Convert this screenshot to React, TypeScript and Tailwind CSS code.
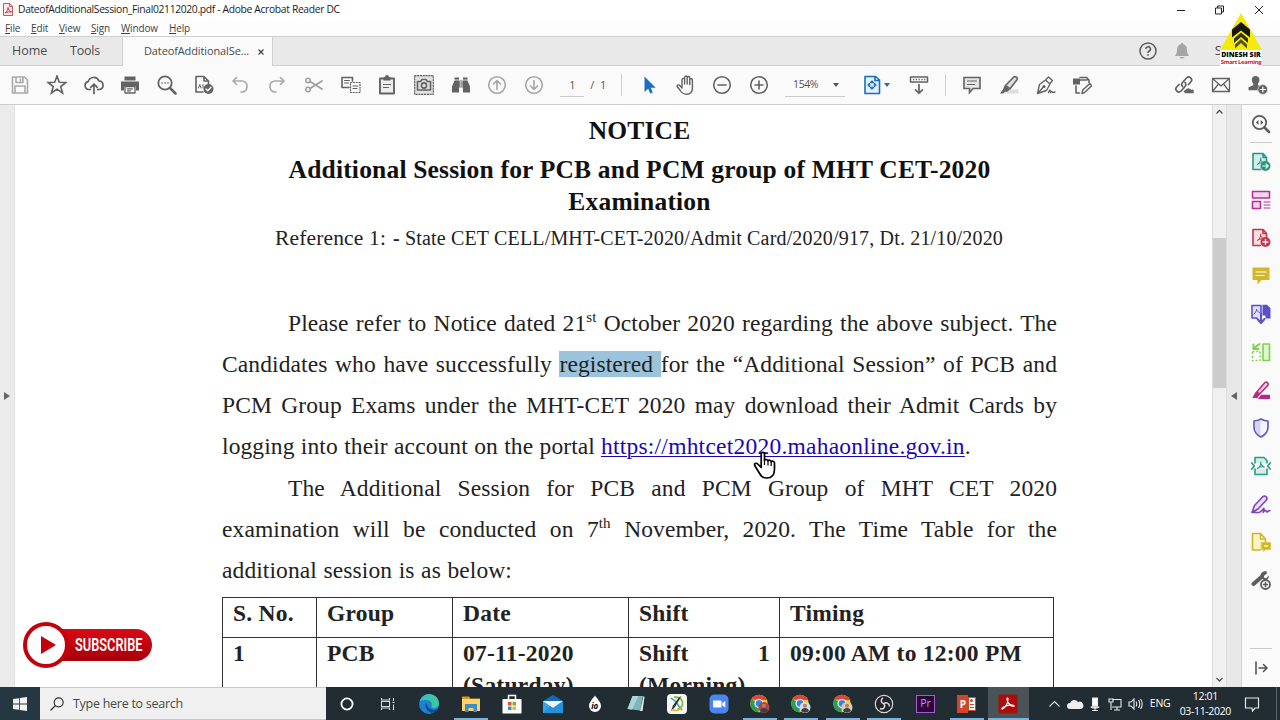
import type { ReactNode } from "react";

const UI = "font-['Open_Sans','Noto_Sans',sans-serif]";
const SERIF = "font-['Liberation_Serif','Times_New_Roman',serif]";

function Icon({ children, className = "text-[#636363]", size = 20 }: { children: ReactNode; className?: string; size?: number }) {
  return (
    <svg
      width={size}
      height={size}
      viewBox="0 0 20 20"
      fill="none"
      stroke="currentColor"
      strokeWidth="1.6"
      strokeLinecap="round"
      strokeLinejoin="round"
      className={`shrink-0 ${className}`}
    >
      {children}
    </svg>
  );
}

function Cell({ children }: { children: ReactNode }) {
  return <div className="flex w-[36.7px] shrink-0 items-center justify-center">{children}</div>;
}

const pdfMark = "M6.5 12.5c2-1 3.3-3.500 3.300-6.500M9.800 7.500c.7 2 1.800 3.200 3.700 3.700M7 11.800c1.500-.8 4-1.200 6-.8";

const leftTools: ReactNode[] = [
  <Icon className="text-[#a9a9a9]">
    <path d="M2.500 2h12l3 3v13h-15zM6 2.500v5h7v-5M10.500 4v2M5 18v-7h10v7" />
  </Icon>,
  <Icon>
    <path d="M10 1l2.300 6.300 6.700.2-5.300 4.100 1.900 6.400-5.600-3.800L4.400 18l1.900-6.400L1 7.500l6.700-.2z" strokeLinejoin="miter" />
  </Icon>,
  <Icon>
    <path d="M6.500 14.500H5a4 4 0 01-.8-7.900A5.800 5.800 0 0115 5.800a4.400 4.400 0 01.5 8.700h-2M10 18.500V9.500M6.800 12.300L10 9l3.200 3.300" strokeWidth="1.700" />
  </Icon>,
  <Icon>
    <path d="M4.500 1.500h11v4h-11z" fill="currentColor" stroke="none" />
    <path d="M1 6.500h18v9h-3v-4H4v4H1z" fill="currentColor" stroke="none" />
    <path d="M5 11.500h10v6.500H5zM7.500 13.800h5M7.500 15.800h3" strokeWidth="1.300" />
  </Icon>,
  <Icon>
    <circle cx="8" cy="8" r="6.700" strokeWidth="1.800" />
    <path d="M13 13l5.500 5.500" strokeWidth="2.500" />
    <path d="M5 8h.1M8 8h.1M11 8h.1" strokeWidth="1.600" />
  </Icon>,
  <Icon>
    <path d="M9 17H2V1.500h8L14.500 6v3M10 1.500V6h4.500" />
    <path d="M4.500 13l1.300-3.500L7 13M9 9.500V13" strokeWidth="1" />
    <circle cx="14.500" cy="14" r="5" fill="currentColor" stroke="none" />
    <path d="M12 14l1.800 1.800 3.200-3.500" stroke="white" strokeWidth="1.300" />
  </Icon>,
  <Icon className="text-[#aaaaaa]">
    <path d="M6.500 2.500L3 6l3.500 3.500M3.500 6H12a5 5 0 015 5v1a5 5 0 01-5 5h-1" strokeWidth="1.700" />
  </Icon>,
  <Icon className="text-[#aaaaaa]">
    <path d="M13.500 2.500L17 6l-3.500 3.500M16.500 6H8a5 5 0 00-5 5v1a5 5 0 005 5h1" strokeWidth="1.700" />
  </Icon>,
  <Icon className="text-[#a0a0a0]">
    <circle cx="4" cy="5.500" r="2.200" />
    <circle cx="4" cy="14.500" r="2.200" />
    <path d="M6 6.600L18 14M6 13.400L18 6" strokeWidth="1.800" />
  </Icon>,
  <Icon>
    <path d="M8 12.500H1v-10h10.500V6" strokeWidth="1.600" />
    <path d="M3.500 5.500h5M3.500 8h4" strokeWidth="1.100" />
    <path d="M9.500 7.500h9.500v10H9.500z" strokeWidth="1.200" strokeDasharray="1.200 1.600" />
    <path d="M12 11h5M12 13.500h4" strokeWidth="1" />
  </Icon>,
  <Icon>
    <path d="M3 3.500h14V18.500H3z" fill="#eeeeee" strokeWidth="1.900" />
    <path d="M6.500 2H8a2 2 0 014 0h1.500v3.500h-7z" fill="currentColor" stroke="none" />
    <path d="M6.500 9.500h7M6.500 12.500h5" strokeWidth="1.200" />
  </Icon>,
  <Icon>
    <path d="M.7.700h18.600v18.600H.7z" fill="#e0e0e0" strokeWidth="1.200" strokeDasharray="1.300 1.500" />
    <path d="M3.500 6.500h3l1.500-2h4l1.500 2h3v8.500h-13z" strokeWidth="1.600" />
    <circle cx="10" cy="10.500" r="2.600" />
  </Icon>,
  <Icon>
    <path d="M3.500 2.500h4.500v3h4v-3h4.500v3l2.500 6v6h-7v-5H8v5H1v-6l2.500-6z" fill="currentColor" stroke="none" />
    <path d="M3 5h5.500M11.500 5H17M9.200 6v6M11 6v6" stroke="#fafafa" strokeWidth=".8" />
  </Icon>,
  <Icon className="text-[#a6a6a6]">
    <circle cx="10" cy="10" r="8.300" />
    <path d="M10 14.500V6M6.500 9L10 5.500 13.500 9" />
  </Icon>,
  <Icon className="text-[#a6a6a6]">
    <circle cx="10" cy="10" r="8.300" />
    <path d="M10 5.500V14M6.500 11l3.500 3.500 3.500-3.500" />
  </Icon>,
];

const viewTools: ReactNode[] = [
  <Icon className="text-[#1b6ec2]">
    <path d="M5.500 1.500v15.500l3.700-3.300 2 4.800 2.500-1-2-4.700h5z" fill="currentColor" stroke="none" />
  </Icon>,
  <Icon>
    <path d="M6.200 11V4.700a1.300 1.300 0 012.600 0V9V2.300a1.300 1.300 0 012.600 0V9V2.800a1.300 1.300 0 012.600 0V9.500V5a1.300 1.300 0 012.600 0v8c0 3.800-2.200 6.200-6 6.200-3.200 0-4.600-1.300-6.100-3.700L1.300 11.500c-.2-1.700 2-2.200 3-.7l1.900 2.300z" strokeWidth="1.400" transform="translate(.8 0)" />
  </Icon>,
  <Icon>
    <circle cx="10" cy="10" r="8.300" />
    <path d="M6 10h8" />
  </Icon>,
  <Icon>
    <circle cx="10" cy="10" r="8.300" />
    <path d="M6 10h8M10 6v8" />
  </Icon>,
];

const commentTools: ReactNode[] = [
  <Icon>
    <path d="M2 2.500h16v11h-7l-3.500 4v-4H2z" fill="#e6e6e6" strokeLinejoin="miter" />
    <path d="M5.500 6h9M5.500 9.500h7" strokeWidth="1.100" />
  </Icon>,
  <Icon>
    <path d="M9 14.500h10.500v4H5z" fill="#dedede" stroke="none" />
    <path d="M6.500 10.500L14.800 2c1.700-1.200 4.300.8 3.200 2.800l-7 9z" fill="#dedede" />
    <path d="M5.500 10.500l5.300 4-2.500 2.300H6L4.300 18.500H1l3-4z" fill="currentColor" stroke="none" />
  </Icon>,
  <Icon>
    <path d="M1.500 18.500l2-9L9.500 5l4.500 4-3.500 6.500zM1.500 18.500l6-6.500M10 4.500L12.500 2l4 3.500L14.500 8M12.500 17.500c1.500-3.500 2-3 2 0 1-1.500 1.500-1.500 2 0l2.500-.5" strokeWidth="1.400" />
    <circle cx="8" cy="11.500" r=".8" fill="currentColor" />
  </Icon>,
  <Icon>
    <path d="M8 5h7M4 11v7h3.500M8 2.500h6.500L17 5v2.500" strokeWidth="1.600" />
    <path d="M1 3.500h7v6H1z" fill="currentColor" stroke="none" />
    <path d="M10 18.500l.8-3.500 7-6.500 2 2.300-7 6.500z" strokeWidth="1.400" />
  </Icon>,
];

const shareTools: ReactNode[] = [
  <Icon>
    <path d="M8.500 11.500a3 3 0 010-4l4-4.500a2.900 2.900 0 014.200 4L14.500 9.500M11 7.500a3 3 0 010 4l-4 4.500a2.900 2.900 0 01-4.300-4L5 9.500" strokeWidth="1.700" />
    <path d="M11.500 18.500a2 2 0 01.3-4 3 3 0 015.200 0 2 2 0 012 4z" fill="currentColor" stroke="#fafafa" strokeWidth=".6" />
  </Icon>,
  <Icon>
    <path d="M1.500 3.500h17v13h-17zM1.500 3.500L10 11l8.500-7.500M1.500 16.500l6-7.500M18.500 16.500l-6-7.500" strokeWidth="1.300" />
  </Icon>,
  <Icon>
    <path d="M7.500 1c5 0 4.500 5.500 2.500 7.500v1.800l2 .9-1.500 4H.5v-3l4.800-2V8.500C3.200 6.500 3 1 7.500 1z" fill="currentColor" stroke="none" />
    <circle cx="14.800" cy="14.500" r="4.900" fill="currentColor" stroke="#fafafa" strokeWidth=".6" />
    <path d="M12.300 14.500h5M14.800 12v5" stroke="white" strokeWidth="1.200" />
  </Icon>,
];

const sideTools: ReactNode[] = [
  <Icon className="text-[#27967f]">
    <path d="M9.500 17.500H2v-16h10l3.500 4V9M12 1.500v4h3.500" fill="#d3eee8" />
    <path d={pdfMark} strokeWidth="1" />
    <circle cx="14.500" cy="14" r="5" fill="currentColor" stroke="none" />
    <path d="M11.800 14h5.200M15 11.800l2.200 2.200-2.200 2.200" stroke="white" strokeWidth="1.200" />
  </Icon>,
  <Icon className="text-[#b4319c]">
    <path d="M1.500 1.500h17V8h-17zM1.500 11.500h8v7h-8z" fill="#f4d3ec" />
    <path d="M13 12h6M13 15h6M13 18h6" strokeWidth="1" />
  </Icon>,
  <Icon className="text-[#c9324b]">
    <path d="M9.500 17.500H2v-16h10l3.500 4V9M12 1.500v4h3.500" fill="#fae0e4" />
    <path d={pdfMark} strokeWidth="1" />
    <circle cx="14.500" cy="14" r="5" fill="currentColor" stroke="none" />
    <path d="M12 14h5M14.500 11.500v5" stroke="white" strokeWidth="1.300" />
  </Icon>,
  <Icon className="text-[#d2b62c]">
    <path d="M1.500 1.500h17V14h-8L6.500 18.500V14h-5z" fill="currentColor" stroke="none" />
    <path d="M5 6h10M5 9.500h8" stroke="white" strokeWidth="1.200" />
  </Icon>,
  <Icon className="text-[#5c50c8]">
    <path d="M6 14H1V1.500h9V12" fill="#e2dffa" />
    <path d="M3 10c1.500-1 2.500-3 2.500-5 .5 2 1.500 3 3 3.500" strokeWidth="1" />
    <path d="M11.500.8h4.500l3.500 3.500V14.500h-5v-3h-3z" fill="currentColor" stroke="none" />
    <path d="M10 10v8M6.500 15l3.500 4 3.500-4" strokeWidth="2" />
  </Icon>,
  <Icon className="text-[#80d24b]">
    <path d="M12 2h6.500v16.500H12z" fill="#dcf6ce" />
    <path d="M1.500 9.500h7.500v9H1.500z" strokeDasharray="1.800 2" strokeLinecap="butt" />
    <path d="M8.500 2L3.500 6M2.500 2.500v4.500h5" strokeWidth="2" />
  </Icon>,
  <Icon className="text-[#bd2680]">
    <path d="M5 13L14 2.500c1.500-1.300 4 .6 3 2.700L8 14.500 3 16.500z" fill="#f6d4e8" />
    <path d="M6.500 11.500L9 13.500 6.500 18H1l3-3zM10 14.800h9V19H7z" fill="currentColor" stroke="none" />
  </Icon>,
  <Icon className="text-[#5a55bd]">
    <path d="M10 1c2.500 1.500 4.500 2 7 2v6c0 5-3 8-7 10-4-2-7-5-7-10V3c2.500 0 4.500-.5 7-2z" fill="#f4f4fd" />
    <path d="M9.500 2v16C6 16 4 13 4 9V3.800c2 0 4-.8 5.500-1.800z" fill="#d5d3f4" stroke="none" />
  </Icon>,
  <Icon className="text-[#2b9b83]">
    <path d="M4 7V1.500h9l3 3V7M4 13v5.500h12V13" fill="#d3eee8" />
    <path d="M.8 7l2.500 3-2.500 3M19.200 7l-2.500 3 2.500 3" strokeWidth="1.700" />
    <path d={pdfMark} strokeWidth="1.100" />
  </Icon>,
  <Icon className="text-[#7c45b8]">
    <path d="M1 18.500l2.500-7L12 2.500c2-1.500 5 .8 3.500 3.500L7 15zM1 18.500h7c3-1 5-6 5-3.500s-2 4.500 0 2.500 2-1.500 2.500 0 1.500-1 3.500-1" fill="#eadcf6" />
  </Icon>,
  <Icon className="text-[#cfb720]">
    <path d="M9.500 18H1.500V1.500h8L14.500 7v3M9.500 1.500V7h5" fill="#f9f3c8" />
    <path d="M10.500 10.500h9v7h-5l-2 2v-2h-2z" fill="currentColor" strokeWidth=".5" />
    <path d="M13 13h4v2h-4z" fill="#efe6a0" stroke="none" />
  </Icon>,
  <Icon className="text-[#5c5c5c]">
    <path d="M2.500 14L10.500 7" strokeWidth="4" />
    <path d="M15.800 3.500l-3 2.500.5 2 2 .3 2.500-2.800c.5 3.500-2.500 5.500-5.500 4.200L9.500 6.500C9 3 12.500.5 15.800 1.500z" fill="currentColor" stroke="none" />
    <circle cx="14.500" cy="14.500" r="4.500" fill="#fafafa" strokeWidth="1.800" />
    <path d="M12.500 14.500h4M14.500 12.500v4" />
  </Icon>,
];

function Chrome({ avatar }: { avatar: string }) {
  return (
    <svg width="22" height="20" viewBox="0 0 22 20">
      <circle cx="10" cy="9.500" r="8.800" fill="#f4c430" />
      <path d="M10 9.500L2.400 5.200A8.800 8.800 0 009.500 18.300z" fill="#2a9d53" />
      <path d="M2.200 5.400A8.800 8.800 0 0118 6H10z" fill="#dd4638" />
      <circle cx="10" cy="9.500" r="4" fill="#3f7fe0" stroke="white" strokeWidth="1.200" />
      <circle cx="15" cy="13.500" r="5.500" fill={avatar} />
      <circle cx="15" cy="11.800" r="2" fill="#b08064" />
      <path d="M11 17a4.200 4.200 0 018 0 5.500 5.500 0 01-8 0z" fill="#3b3f4c" />
    </svg>
  );
}

const apps: { art: ReactNode; open?: boolean; active?: boolean }[] = [
  { art: <svg width="20" height="20"><circle cx="10" cy="10" r="5.600" fill="none" stroke="white" strokeWidth="1.800" /></svg> },
  {
    art: (
      <svg width="20" height="20" fill="none" stroke="#d5d8da" strokeWidth="1.100">
        <path d="M3.500 4v2h8V4M3.500 7.500h8v5h-8zM3.500 16v-2h8v2M15.500 4v3M15.500 10.500V16M14.500 8.500h2" />
      </svg>
    ),
  },
  {
    art: (
      <svg width="22" height="22" viewBox="0 0 22 22">
        <circle cx="11" cy="11" r="10" fill="#1b84d0" />
        <path d="M2 8C4 2 9 .8 12.500 1.200 18 2 21 6 21 10.500c0 3-2.500 4.500-5 4.500-1.800 0-3-.8-2.500-2C15 9.500 11.500 7 8 7c-2.500 0-4.500 0-6 1z" fill="#3cc6a4" />
        <path d="M2 8C4 2 9 .8 12.500 1.200 9 4 5 5 2 8z" fill="#37b5df" />
        <path d="M8.500 9.500C6 13 8 18.500 14 20c3-.8 4.500-2 5.800-4-5 2.300-11-.5-11.300-6.500z" fill="#154b91" />
      </svg>
    ),
  },
  {
    open: true,
    art: (
      <svg width="20" height="20">
        <path d="M1 2.500h7l1.500 2H19V8H1z" fill="#d79a21" />
        <path d="M1 5h18v12H1z" fill="#fcd36a" />
        <path d="M4 10h12v8h-3.500v-4h-5v4H4z" fill="#3b8dcc" />
      </svg>
    ),
  },
  {
    art: (
      <svg width="20" height="22" viewBox="0 0 20 22">
        <path d="M6.500 7V2.500h7V7" fill="none" stroke="white" strokeWidth="1.500" />
        <path d="M.5 6h19v14.500H.5z" fill="white" />
        <path d="M6 9h3.500v3.500H6z" fill="#e64d28" />
        <path d="M10.500 9H14v3.500h-3.500z" fill="#7bb72b" />
        <path d="M6 13.500h3.500V17H6z" fill="#2794d8" />
        <path d="M10.500 13.500H14V17h-3.500z" fill="#f5b51e" />
      </svg>
    ),
  },
  {
    art: (
      <svg width="22" height="20">
        <path d="M1 7l10-6 10 6v3H1z" fill="#1768b3" />
        <path d="M1 7h20v12H1z" fill="#32a8e6" />
        <path d="M1 7h20l-10 7z" fill="#f2f6f8" />
        <path d="M1 19l7-7 3 2 10-7v12z" fill="#2492d8" />
      </svg>
    ),
  },
  {
    art: (
      <div className="relative flex h-5 w-5 items-center justify-center">
        <svg width="16" height="18" viewBox="0 0 16 18" className="absolute">
          <path d="M8 .5c2 3 6 6.500 6 10.500a6 6 0 01-12 0C2 7 6 3.500 8 .5z" fill="white" />
        </svg>
        <span className="relative mt-1 text-[8px] leading-none font-bold text-black italic">io</span>
      </div>
    ),
  },
  {
    art: (
      <svg width="20" height="20">
        <path d="M6.500 2H17l-3 14.500L1.500 15z" fill="#7fb6b8" />
        <path d="M6.500 2h6L6 15.500 1.500 15z" fill="#a9d5d4" />
        <path d="M14 17l3.500-15 1 1L16.500 17z" fill="#e6eceb" />
      </svg>
    ),
  },
  {
    art: (
      <svg width="20" height="20">
        <rect width="20" height="20" rx="4" fill="#f5f7f4" />
        <path d="M7 3c6 0 9 3 8.500 7-.5 3-3 5-5 5" fill="none" stroke="#8dbb3c" strokeWidth="1.800" />
        <path d="M4 4l4 3 7 9" fill="none" stroke="#3aa1b8" strokeWidth="1.500" />
        <path d="M14.500 2L8 13l-4 4 2-5.500 6-8z" fill="#25333c" />
        <path d="M5 15.500c4 2 8 1 9-2" fill="none" stroke="#e0b42f" strokeWidth="1.500" />
      </svg>
    ),
  },
  {
    art: (
      <svg width="20" height="20">
        <rect x=".5" y=".5" width="19" height="19" rx="5" fill="#4a86f0" />
        <path d="M4 6.500h7.500a1 1 0 011 1v6H5a1 1 0 01-1-1zM13.300 9l3-2v6.500l-3-2z" fill="white" />
      </svg>
    ),
  },
  { open: true, art: <Chrome avatar="#b9403c" /> },
  { open: true, art: <Chrome avatar="#d8dadd" /> },
  { open: true, art: <Chrome avatar="#dbcfa8" /> },
  {
    open: true,
    art: (
      <svg width="20" height="20" viewBox="0 0 20 20">
        <circle cx="10" cy="10" r="8.700" fill="#23252a" stroke="#d6d8da" strokeWidth="1.200" />
        <path d="M9 4c-2.500 1.500-2.500 5 1 6M15.500 12.500c0-3-3.500-5-5.500-2.500M6 14.500c3 1.500 6-1.500 4-4.500" fill="none" stroke="#d6d8da" strokeWidth="1.500" />
      </svg>
    ),
  },
  {
    art: (
      <div className="flex h-[18px] w-[19px] items-center justify-center border border-[#a65bd0] bg-[#2a0639] text-[10.5px] leading-none text-[#d48cf5]">Pr</div>
    ),
  },
  {
    open: true,
    art: (
      <div className="flex items-center">
        <div className="flex h-[18px] w-[11px] items-center justify-center bg-[#d04727] text-[10px] leading-none font-bold text-white">P</div>
        <div className="flex h-[14px] w-2 flex-col justify-center gap-[2px] border border-[#d04727] bg-white px-px">
          <div className="h-[3px] w-[3px] rounded-full bg-[#d04727]" />
          <div className="h-px bg-[#d04727]" />
          <div className="h-px bg-[#d04727]" />
        </div>
      </div>
    ),
  },
  {
    open: true,
    active: true,
    art: (
      <svg width="20" height="20">
        <rect x=".5" y=".5" width="19" height="19" rx="3" fill="#ad0c0b" />
        <path d="M4.500 15c3-1.500 5.500-6 5.500-10 0-1.500-1.500-1-1 .5.800 3 3 6 6.500 7 1 0 .5-1.500-1-1.500-3.500-.5-6.500.5-9.500 2.500-1.500 1-1.300 1.900-.5 1.500z" fill="none" stroke="white" strokeWidth="1.200" />
      </svg>
    ),
  },
];

function TitleBar() {
  return (
    <div className="flex h-[19px] items-center bg-white text-[#1c1c1c]">
      <svg width="10" height="13" viewBox="0 0 10 13" className="ml-[3px]" fill="none" stroke="#c8283c">
        <path d="M.5.500h6l3 3v9h-9zM6.500.500v3h3" fill="#fbe9eb" strokeWidth=".8" />
        <path d="M2 10c2-1 3-3.500 3-5.500.3 2.500 1.500 4 3.500 4.500-2-.5-4 0-6.500 1z" strokeWidth=".9" />
      </svg>
      <span className="mt-px ml-[5px] text-[10.3px] tracking-[-0.33px] whitespace-nowrap">DateofAdditionalSession_Final02112020.pdf - Adobe Acrobat Reader DC</span>
      <svg width="90" height="12" viewBox="0 0 90 12" className="mr-4 ml-auto" fill="none" stroke="#222">
        <path d="M3 6.500h8" />
        <path d="M41.500 4h6v6h-6zM43.500 4V2h6v6h-2" />
        <path d="M81 2l8 8M89 2l-8 8" />
      </svg>
    </div>
  );
}

function MenuBar() {
  const items: [string, string][] = [
    ["File", "w-[26px]"],
    ["Edit", "w-[28px]"],
    ["View", "w-[32px]"],
    ["Sign", "w-[30px]"],
    ["Window", "w-[48px]"],
    ["Help", "w-[30px]"],
  ];
  return (
    <div className="flex h-[17px] items-center bg-[#fdfdfd] pt-px pl-[5px] text-[10px] tracking-[-0.15px] text-[#444]">
      {items.map(([label, width]) => (
        <span key={label} className={width}>
          <span className="underline">{label[0]}</span>
          {label.slice(1)}
        </span>
      ))}
    </div>
  );
}

function TabBar() {
  return (
    <div className="flex h-[30px] border-t border-[#cfcfcf] bg-[#e9e9e9] text-[#4b4b4b]">
      <div className="flex w-[123px] items-center border-r border-b border-[#cfcfcf] pl-3 text-[12.5px]">
        <span className="w-[58px]">Home</span>
        <span className="tracking-[-0.2px]">Tools</span>
      </div>
      <div className="flex w-[149px] items-center bg-[#fafafa] pl-[21px] text-[11px] tracking-[-0.12px]">
        <span className="w-[114px] whitespace-nowrap">DateofAdditionalSe...</span>
        <svg width="6" height="6" stroke="#444" strokeWidth="1.200">
          <path d="M.5.500l5 5M5.500.500l-5 5" />
        </svg>
      </div>
      <div className="flex flex-1 items-center justify-end border-b border-l border-[#cfcfcf] pr-[58px]">
        <svg width="18" height="18" viewBox="0 0 18 18" fill="none" stroke="#5c5c5c" strokeWidth="1.500">
          <circle cx="9" cy="9" r="8" />
          <path d="M6.800 7a2.300 2.300 0 113.400 2c-.9.500-1.200.9-1.200 1.900M9 12.200v1.500" strokeWidth="1.600" />
        </svg>
        <svg width="16" height="18" viewBox="0 0 16 18" fill="#a5a5a5" className="mr-[25px] ml-[17px]">
          <path d="M8 1c1 0 1.300.7 1.300 1.300C12 3 13 5 13 8c0 3 1 4.500 2 6H1c1-1.500 2-3 2-6 0-3 1-5 3.700-5.700C6.700 1.700 7 1 8 1zM5.500 15h5c-.5 2.200-4.500 2.200-5 0z" />
        </svg>
        <span className="text-[13px]">S</span>
      </div>
    </div>
  );
}

function Toolbar() {
  return (
    <div className="flex h-[39px] items-center border-b border-[#cdcdcd] bg-[#fafafa] pl-[2px] text-[11px] text-[#555]">
      {leftTools.map((icon, i) => (
        <Cell key={i}>{icon}</Cell>
      ))}
      <div className="ml-[8px] flex h-6 w-6 items-center justify-center border-b border-[#cccccc] pt-px">1</div>
      <div className="ml-[6px] w-[31px] pt-px whitespace-pre">{"/  1"}</div>
      <div className="h-[22px] w-px bg-[#cfcfcf]" />
      <div className="ml-[8px] flex">
        {viewTools.map((icon, i) => (
          <Cell key={i}>{icon}</Cell>
        ))}
      </div>
      <div className="ml-[8px] flex h-6 w-[60px] items-center justify-between border-b border-[#cccccc] pt-px pr-[6px] pl-[8px] text-[10.5px] tracking-[-0.4px]">
        154%
        <svg width="6" height="4" fill="#555">
          <path d="M0 0h6L3 4z" />
        </svg>
      </div>
      <div className="ml-[17px] flex items-center gap-[2px]">
        <Icon className="text-[#1b6ec2]">
          <path d="M3 1.500h10.500L17.500 5v13.500H3zM13 1.500V5.500h4.500" fill="#e4f0fb" />
          <path d="M10 6v8M6 10h8" strokeDasharray="2.500 3" strokeLinecap="butt" />
          <path d="M8.500 7.500L10 6l1.500 1.500M8.500 12.500L10 14l1.500-1.500M7.500 8.500L6 10l1.500 1.500M12.500 8.500L14 10l-1.500 1.500" strokeWidth="1.200" />
        </Icon>
        <svg width="6" height="4" fill="#1b6ec2">
          <path d="M0 0h6L3 4z" />
        </svg>
      </div>
      <div className="ml-[19px]">
        <Icon>
          <path d="M1.500 2h17v5h-17z" strokeWidth="1.500" />
          <path d="M4 4.500h12.500" strokeDasharray="1.200 1.600" strokeLinecap="butt" />
          <path d="M10 9.500V18M6.500 14.800L10 18.200l3.500-3.400" strokeWidth="1.700" />
        </Icon>
      </div>
      <div className="ml-[16px] h-[22px] w-px bg-[#cfcfcf]" />
      <div className="ml-[8px] flex">
        {commentTools.map((icon, i) => (
          <Cell key={i}>{icon}</Cell>
        ))}
      </div>
      <div className="mr-[4px] ml-auto flex">
        {shareTools.map((icon, i) => (
          <Cell key={i}>{icon}</Cell>
        ))}
      </div>
    </div>
  );
}

function Line({ children, className = "" }: { children: ReactNode; className?: string }) {
  return <div className={`h-[41.25px] whitespace-nowrap [text-align-last:justify] ${className}`}>{children}</div>;
}

function Sup({ children }: { children: ReactNode }) {
  return <span className="relative -top-[9px] text-[15px] leading-none">{children}</span>;
}

function Notice() {
  const th = "border-r border-[#333] pl-[10px]";
  return (
    <div className={`flex-1 overflow-hidden bg-white pt-[10px] pl-[207px] text-[#222] ${SERIF}`}>
      <div className="w-[835px] text-center text-[25.5px] leading-8 font-bold tracking-[0.19px] text-[#111]">
        <div>NOTICE</div>
        <div className="mt-[7px] whitespace-nowrap">Additional Session for PCB and PCM group of MHT CET-2020</div>
        <div>Examination</div>
      </div>
      <div className="mt-1 flex items-baseline pl-[53px] leading-8 whitespace-nowrap">
        <span className="w-[118px] text-[21.5px] tracking-[0.15px]">Reference 1:</span>
        <b className="w-[12px] text-[20px]">-</b>
        <span className="text-[20px] tracking-[0.165px]">State CET CELL/MHT-CET-2020/Admit Card/2020/917, Dt. 21/10/2020</span>
      </div>
      <div className="mt-[48.5px] w-[835px] text-[23.5px] leading-[41.25px] tracking-[0.1px]">
        <Line className="pl-[66px]">
          Please refer to Notice dated 21<Sup>st</Sup> October 2020 regarding the above subject. The
        </Line>
        <Line>
          Candidates who have successfully <span className="bg-[#9cc3dc]">registered&nbsp;</span>
          for the “Additional Session” of PCB and
        </Line>
        <Line>PCM Group Exams under the MHT-CET 2020 may download their Admit Cards by</Line>
        <div className="flex h-[41.25px] whitespace-nowrap">
          <span className="mr-[6px] w-[373px] [text-align-last:justify]">logging into their account on the portal</span>
          <span className="tracking-[0.23px] text-[#1a06b8] underline decoration-[#1a06b8] decoration-1 underline-offset-2">
            https://mhtcet2020.mahaonline.gov.in
          </span>
          .
        </div>
        <Line className="pl-[66px]">The Additional Session for PCB and PCM Group of MHT CET 2020</Line>
        <Line>
          examination will be conducted on 7<Sup>th</Sup> November, 2020. The Time Table for the
        </Line>
        <Line className="w-[290px]">additional session is as below:</Line>
      </div>
      <div className="mt-[5.5px] grid w-[832px] grid-cols-[94px_136px_176px_151px_274px] border-t border-l border-[#333] text-[23.5px] leading-8 font-bold tracking-[0.24px]">
        {["S. No.", "Group", "Date", "Shift", "Timing"].map((h) => (
          <div key={h} className={`h-10 border-b leading-[31px] ${th}`}>
            {h}
          </div>
        ))}
        <div className={`-mt-px ${th}`}>1</div>
        <div className={`-mt-px ${th}`}>PCB</div>
        <div className={`-mt-px ${th}`}>
          07-11-2020
          <br />
          (Saturday)
        </div>
        <div className={`-mt-px ${th}`}>
          <div className="flex justify-between pr-[9px]">
            <span>Shift</span>
            <span>1</span>
          </div>
          (Morning)
        </div>
        <div className={`-mt-px ${th}`}>09:00 AM to 12:00 PM</div>
      </div>
    </div>
  );
}

function Workspace() {
  return (
    <div className="flex h-[582px] overflow-hidden bg-[#e9e9e9]">
      <div className="flex w-[15px] items-center justify-center border-r border-[#e2e2e2] bg-[#ebebeb]">
        <svg width="6" height="8" fill="#666">
          <path d="M0 0l6 4-6 4z" />
        </svg>
      </div>
      <Notice />
      <div className="flex w-[15px] flex-col items-center border-x border-[#dcdcdc] bg-[#f0f0f0]">
        <svg width="9" height="14" fill="none" stroke="#555" strokeWidth="1.400">
          <path d="M1.500 8.500l3-3 3 3" />
        </svg>
        <div className="mt-[119px] h-[150px] w-[13px] bg-[#cccccc]" />
        <svg width="9" height="14" fill="none" stroke="#555" strokeWidth="1.400" className="mt-auto">
          <path d="M1.500 5l3 3 3-3" />
        </svg>
      </div>
      <div className="flex w-[15px] items-center justify-center border-r border-[#d4d4d4] bg-[#e8e8e8]">
        <svg width="6" height="8" fill="#666">
          <path d="M6 0L0 4l6 4z" />
        </svg>
      </div>
      <div className="flex w-[38px] flex-col items-center bg-[#fafafa] pt-[9px]">
        <Icon className="text-[#5c5c5c]">
          <circle cx="8.500" cy="8.500" r="6.700" strokeWidth="1.800" />
          <path d="M13.500 13.500l4.500 4.500" strokeWidth="2.500" />
          <path d="M7.500 6v5L4.800 8.500zM9.700 6v5l2.700-2.500z" fill="currentColor" stroke="none" />
        </Icon>
        <div className="mt-[8px] h-px w-[22px] bg-[#c9c9c9]" />
        <div className="mt-[9px] flex flex-col gap-[18px]">
          {sideTools.map((icon, i) => (
            <div key={i}>{icon}</div>
          ))}
        </div>
        <div className="mt-auto h-px w-[22px] bg-[#c9c9c9]" />
        <div className="mt-[9px] mb-[9px]">
          <Icon className="text-[#555]">
            <path d="M5 4v12M8 10h8M12.500 6.500L16 10l-3.500 3.500" strokeWidth="1.600" />
          </Icon>
        </div>
      </div>
    </div>
  );
}

function Taskbar() {
  return (
    <div className="flex h-[33px] bg-[#222d33] text-white">
      <div className="flex w-10 items-center justify-center bg-[#253740]">
        <svg width="14" height="14" viewBox="0 0 14 14" fill="#f4f4f4">
          <path d="M0 2l6-.8v5.400H0zM6.800 1L14 0v6.600H6.800zM0 7.400h6v5.400L0 12zM6.800 7.400H14V14l-7.200-1z" />
        </svg>
      </div>
      <div className="flex w-[286px] items-center border-y border-[#c8c8c8] bg-[#f0f0f0] pl-[10px] text-[#484848]">
        <svg width="14" height="14" viewBox="0 0 14 14" fill="none" stroke="#333" strokeWidth="1.200">
          <circle cx="8.700" cy="5.300" r="4.500" />
          <path d="M5.500 8.500L.5 13.500" />
        </svg>
        <span className="mt-px ml-[9px] text-[12.5px] tracking-[-0.27px]">Type here to search</span>
      </div>
      <div className="flex">
        {apps.map((app, i) => (
          <div key={i} className={`flex w-[41.35px] flex-col items-center justify-between ${app.active ? "bg-[#4a5358]" : ""}`}>
            <div className="flex h-[33px] items-center">{app.art}</div>
            {app.open && <div className={`-mt-[2px] h-[2px] bg-[#78b4e2] ${app.active ? "w-full" : "w-[34px]"}`} />}
          </div>
        ))}
      </div>
      <div className="ml-[19px] flex items-center text-[10.5px]">
        <svg width="96" height="16" viewBox="0 0 96 16" fill="none" stroke="#e6e8e9" strokeWidth="1.100">
          <path d="M1.500 10.500l5-5 5 5" />
          <path d="M22 13a3 3 0 010-6 4.500 4.500 0 018-1 3.500 3.500 0 013 7z" fill="#eeeeee" stroke="none" />
          <path d="M44.500 2h5v8h-5zM43 10.500c0 2 8 2 8 0M47 12v2.500M44 14.500h6" fill="white" />
          <path d="M64 3.500h9v7.500h-9M66 14h6M69 11v3M61 3h4v3h-4zM63 6v8" />
          <path d="M81 6h2l3-3v10l-3-3h-2zM88 5.500q1.500 2.500 0 5M90.500 4q2.500 4 0 8M92.500 3q3.500 5 0 10" />
        </svg>
        <span className="ml-[6px] w-[28px] tracking-[-0.3px]">ENG</span>
        <div className="w-[55px] text-center text-[10.5px] leading-[15px] tracking-[-0.35px]">
          <div>12:01</div>
          <div>03-11-2020</div>
        </div>
        <svg width="16" height="16" viewBox="0 0 16 16" fill="none" stroke="#e6e8e9" strokeWidth="1.200" className="ml-[11px]">
          <path d="M1.500 2h13v10H11l-2.500 3L8 12H1.500z" />
        </svg>
      </div>
      <div className="mr-[3px] ml-auto w-px bg-[#5b656a]" />
    </div>
  );
}

function Subscribe() {
  return (
    <div className="absolute top-[622px] left-[23px] flex h-[46px] w-[130px] items-center">
      <div className="ml-6 flex h-8 w-[105px] items-center rounded-r-full bg-gradient-to-b from-[#d90a14] to-[#a8000a] pl-[28px]">
        <span className="origin-left scale-x-[0.69] font-['Roboto',sans-serif] text-[18.5px] leading-none font-semibold text-white">SUBSCRIBE</span>
      </div>
      <div className="absolute top-0 left-0 flex h-[46px] w-[46px] items-center justify-center rounded-full border-4 border-[#c4000c] bg-white">
        <svg width="15" height="18" fill="#c4000c" className="ml-1">
          <path d="M0 0l15 9-15 9z" />
        </svg>
      </div>
    </div>
  );
}

function ChannelLogo() {
  return (
    <div className="absolute top-[13px] left-[1219px] flex w-[44px] flex-col items-center">
      <svg width="42" height="37" viewBox="0 0 42 37">
        <path d="M21 0l21 37H0z" fill="#f5ea0a" />
        <path d="M21 9l9 7.500v8l-9-7-9 7v-8z" fill="#161610" />
        <path d="M21 19.500l7 6v4.500l-7-6-7 6v-4.500z" fill="#33331a" />
        <path d="M21 26l6 5.500v4l-6-5.500-6 5.500v-4z" fill="#55552a" />
      </svg>
      <div className="flex h-[17px] w-[42px] flex-col items-center bg-white whitespace-nowrap">
        <span className="text-[7px] leading-[9px] font-extrabold text-black">DINESH SIR</span>
        <span className="text-[6px] leading-[7px] font-bold tracking-[-0.4px] text-[#d0123c]">Smart Learning</span>
      </div>
    </div>
  );
}

export default function App() {
  return (
    <div className={`relative flex h-[720px] w-[1280px] flex-col overflow-hidden bg-white ${UI}`}>
      <TitleBar />
      <MenuBar />
      <TabBar />
      <Toolbar />
      <Workspace />
      <Taskbar />
      <Subscribe />
      <ChannelLogo />
      <svg width="24" height="29" viewBox="0 0 24 29" className="absolute top-[451px] left-[753px]">
        <path
          d="M8.200 16.500V3c0-2.300 3.300-2.300 3.300 0v6.500c.3-1.500 3.300-1.300 3.500.5.600-1.300 3-1 3.200.8.600-1 3.300-.8 3.300 1.200V18c0 6-2.500 9-7.500 9-4.500 0-6-2-8-5.500L1.700 14.500c-.8-2 1.500-3 3-1.500z"
          fill="white"
          stroke="black"
          strokeWidth="1.700"
          strokeLinejoin="round"
        />
        <path d="M11.500 9v5M15 10v4.500M18.200 11v4" stroke="black" strokeWidth="1.200" />
      </svg>
    </div>
  );
}
